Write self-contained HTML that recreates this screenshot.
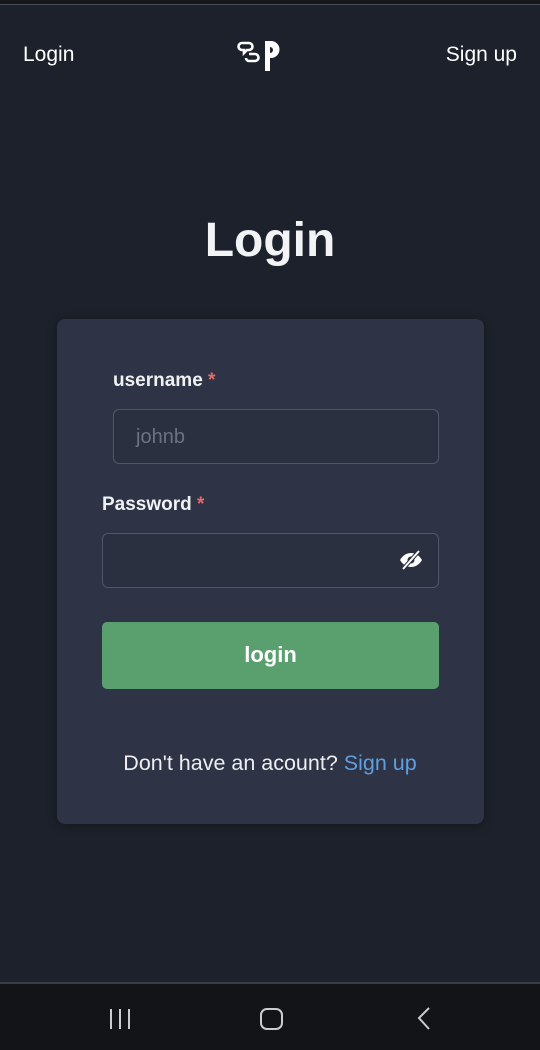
<!DOCTYPE html>
<html><head><meta charset="utf-8"><style>
*{margin:0;padding:0;box-sizing:border-box}
body{width:540px;height:1050px;background:#1d212b;font-family:"Liberation Sans",Roboto,sans-serif;position:relative;overflow:hidden;color:#eef0f4}
.topline{position:absolute;left:0;top:0;width:540px;height:5px;background:#15171c;border-bottom:1px solid #4a4d55}
.nav{position:absolute;top:43px;font-size:21px;color:#fff}
h1{position:absolute;top:213px;left:0;width:540px;text-align:center;font-size:48px;font-weight:700;color:#f2f3f5}
.card{position:absolute;left:57px;top:319px;width:427px;height:505px;background:#2e3445;border-radius:8px;box-shadow:0 2px 10px rgba(0,0,0,.3)}
.lbl{position:absolute;font-size:19px;color:#f0f1f3;font-weight:700}
.lbl span{color:#e26a6a}
.inp{position:absolute;border:1px solid #4f5668;border-radius:6px;background:#2a3040}
.btn{position:absolute;left:102px;top:622px;width:337px;height:67px;background:#5a9f6e;border-radius:5px;color:#fff;font-weight:700;font-size:22px;text-align:center;line-height:66px}
.foot{position:absolute;top:751px;left:0;width:540px;text-align:center;font-size:21.5px;color:#eceef2}
.foot a{color:#5f9fe0}
.bar{position:absolute;left:0;top:982px;width:540px;height:68px;background:#121418;border-top:2px solid #3a3d44}
</style></head><body>
<div class="topline"></div>
<div class="nav" style="left:23px">Login</div>
<div class="nav" style="right:23px">Sign up</div>
<svg style="position:absolute;left:237px;top:38px" width="48" height="34" viewBox="0 0 48 34">
<path d="M5 5h7a3 3 0 0 1 0 7h-2l-3 3v-3H5a3.5 3.5 0 0 1 0-7z" fill="none" stroke="#fff" stroke-width="2.6"/>
<path d="M12 16h6a3 3 0 0 1 0 7h-6a3 3 0 0 1-3-3" fill="none" stroke="#fff" stroke-width="2.6"/>
<path d="M28 33V3h6a8.5 8.5 0 0 1 0 17h-1v13z" fill="#fff"/>
<path d="M33 9v6a3 3 0 0 0 0-6z" fill="#1d212b"/>
</svg>
<h1>Login</h1>
<div class="card"></div>
<div class="lbl" style="left:113px;top:370px">username <span>*</span></div>
<div class="inp" style="left:113px;top:409px;width:326px;height:55px"></div>
<div style="position:absolute;left:136px;top:426px;font-size:20px;color:#6b7282">johnb</div>
<div class="lbl" style="left:102px;top:494px">Password <span>*</span></div>
<div class="inp" style="left:102px;top:533px;width:337px;height:55px"></div>
<svg style="position:absolute;left:399px;top:550px" width="24" height="20" viewBox="0 0 24 20">
<path d="M1 10c3-5 7-7 11-7s8 2 11 7c-3 5-7 7-11 7S4 15 1 10z" fill="#fff"/>
<circle cx="12" cy="10" r="3.5" fill="#2a3040"/>
<path d="M4 19L20 1" stroke="#2a3040" stroke-width="4"/>
<path d="M4 19L20 1" stroke="#fff" stroke-width="2"/>
</svg>
<div class="btn">login</div>
<div class="foot">Don't have an acount? <a>Sign up</a></div>
<div class="bar">
<svg style="position:absolute;left:108px;top:24px" width="26" height="22"><path d="M3 1v20M12 1v20M21 1v20" stroke="#ccc" stroke-width="2"/></svg>
<svg style="position:absolute;left:259px;top:24px" width="26" height="22"><rect x="2" y="1" width="21" height="20" rx="6" fill="none" stroke="#ccc" stroke-width="2"/></svg>
<svg style="position:absolute;left:414px;top:22px" width="20" height="26"><path d="M15 2L5 12l10 11" fill="none" stroke="#ccc" stroke-width="2"/></svg>
</div>
</body></html>
